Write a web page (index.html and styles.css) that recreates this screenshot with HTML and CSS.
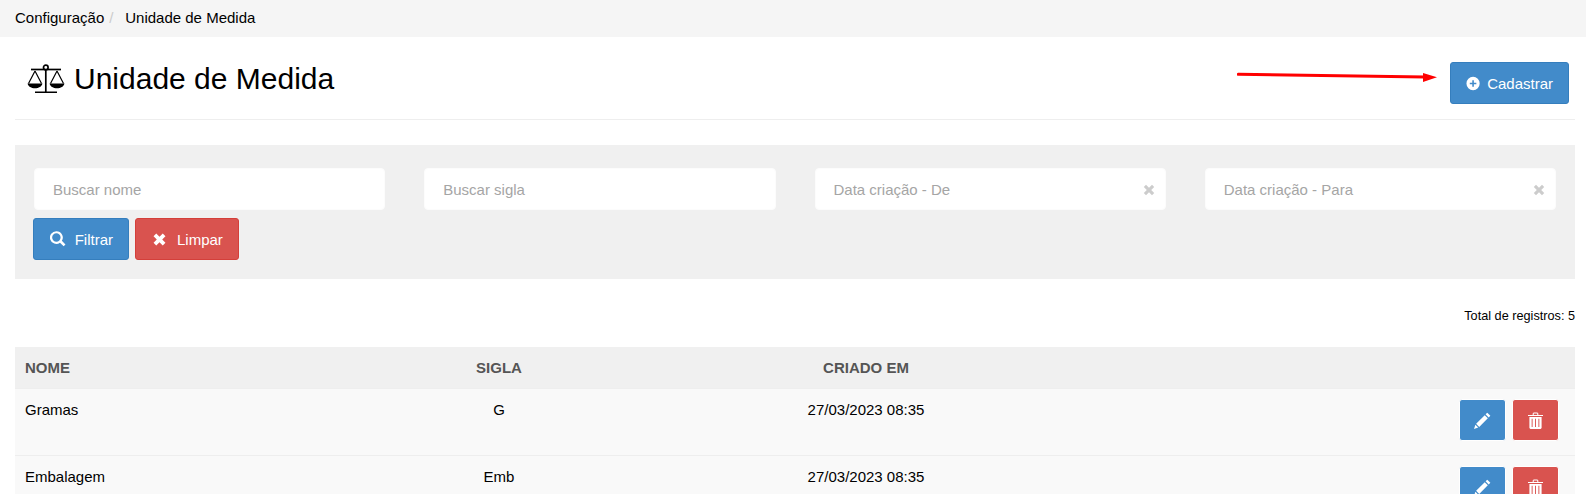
FILE: index.html
```html
<!DOCTYPE html>
<html lang="pt-BR">
<head>
<meta charset="utf-8">
<title>Unidade de Medida</title>
<link rel="stylesheet" href="styles.css">
</head>
<body>
<nav class="breadcrumb"><span>Configuração</span><span class="sep">/</span><span>Unidade de Medida</span></nav>
<main class="content">
  <header class="page-head">
    <h1 class="title">
      <svg class="scale" viewBox="0 0 38 30" aria-hidden="true"><g fill="none" stroke="#000" stroke-width="1.700"><path d="M4 5.500h30"/><path d="M18.800 5v23"/><circle cx="18.800" cy="3.400" r="2.300" fill="#fff"/></g><g fill="none" stroke="#000" stroke-width="1.200"><path d="M8 7 1.500 19.500M8 7l6.500 12.500M30 7l-6.500 12.500M30 7l6.500 12.500"/></g><path d="M.5 19.500h15c-.8 3.200-3.800 4.800-7.500 4.800s-6.700-1.600-7.500-4.800ZM22.500 19.500h15c-.8 3.200-3.800 4.800-7.500 4.800s-6.700-1.600-7.500-4.800Z"/><path d="M8 27.500h22V29H8z"/></svg>
      Unidade de Medida
    </h1>
    <button class="btn btn-blue btn-add"><svg class="ic" viewBox="0 0 16 16"><path fill-rule="evenodd" d="M8 .5a7.500 7.500 0 1 0 0 15 7.500 7.500 0 0 0 0-15ZM7.100 4.300h1.800v2.800h2.800v1.800H8.900v2.800H7.100V8.900H4.300V7.100h2.800Z"/></svg>Cadastrar</button>
    <svg class="arrow" viewBox="0 0 202 12" aria-hidden="true"><path d="M1.300 2.300 188 5" stroke="#f00" stroke-width="3" stroke-linecap="round" fill="none"/><path d="M186 1l14 4.300L186 10Z" fill="#f00"/></svg>
  </header>

  <section class="filters">
    <div class="fields">
      <div class="field">Buscar nome</div>
      <div class="field">Buscar sigla</div>
      <div class="field">Data criação - De<svg class="clear" viewBox="0 0 12 12"><path d="M3 .8 6 3.800 9 .8 11.200 3 8.200 6l3 3L9 11.200l-3-3-3 3L.8 9l3-3-3-3Z"/></svg></div>
      <div class="field">Data criação - Para<svg class="clear" viewBox="0 0 12 12"><path d="M3 .8 6 3.800 9 .8 11.200 3 8.200 6l3 3L9 11.200l-3-3-3 3L.8 9l3-3-3-3Z"/></svg></div>
    </div>
    <div class="actions">
      <button class="btn btn-blue btn-filter"><svg class="ic" viewBox="0 0 16 16"><path fill-rule="evenodd" d="M6.500 0a6.500 6.500 0 1 0 3.700 11.800l3.700 3.700 1.900-1.900-3.700-3.700A6.500 6.500 0 0 0 6.500 0Zm0 2.200a4.300 4.300 0 1 1 0 8.600 4.300 4.300 0 0 1 0-8.600Z"/></svg>Filtrar</button>
      <button class="btn btn-red btn-clear"><svg class="ic" viewBox="0 0 12 12"><path d="M3 .5 6 3.500 9 .5 11.500 3 8.500 6l3 3L9 11.500l-3-3-3 3L.5 9l3-3-3-3Z"/></svg>Limpar</button>
    </div>
  </section>

  <p class="total">Total de registros: 5</p>

  <div class="table">
    <div class="row head">
      <div class="c-name">NOME</div><div class="c-center">SIGLA</div><div class="c-center">CRIADO EM</div><div></div>
    </div>
    <div class="row">
      <div class="c-name">Gramas</div><div class="c-center">G</div><div class="c-center">27/03/2023 08:35</div>
      <div class="c-act">
        <button class="btn-sq btn-blue"><svg class="ic-e" viewBox="0 0 16 16"><path d="M12.500.6 15.400 3.500 13.800 5.100 10.900 2.200ZM10.100 3 13 5.900 4.900 14 2 11.100ZM1.300 12 4 14.700 0 16Z"/></svg></button>
        <button class="btn-sq btn-red"><svg class="ic-t" viewBox="0 0 16 18"><path fill-rule="evenodd" d="M0 3h5V1.500L6 .5h4l1 1V3h5v1.100H0ZM6.100 3h3.800V1.600H6.100ZM1.500 5.200h13V17l-1 1h-11l-1-1ZM3.900 7v9h1V7Zm3.600 0v9h1V7Zm3.600 0v9h1V7Z"/></svg></button>
      </div>
    </div>
    <div class="row">
      <div class="c-name">Embalagem</div><div class="c-center">Emb</div><div class="c-center">27/03/2023 08:35</div>
      <div class="c-act">
        <button class="btn-sq btn-blue"><svg class="ic-e" viewBox="0 0 16 16"><path d="M12.500.6 15.400 3.500 13.800 5.100 10.900 2.200ZM10.100 3 13 5.900 4.900 14 2 11.100ZM1.300 12 4 14.700 0 16Z"/></svg></button>
        <button class="btn-sq btn-red"><svg class="ic-t" viewBox="0 0 16 18"><path fill-rule="evenodd" d="M0 3h5V1.500L6 .5h4l1 1V3h5v1.100H0ZM6.100 3h3.800V1.600H6.100ZM1.500 5.200h13V17l-1 1h-11l-1-1ZM3.900 7v9h1V7Zm3.600 0v9h1V7Zm3.600 0v9h1V7Z"/></svg></button>
      </div>
    </div>
  </div>
</main>
</body>
</html>
```
FILE: styles.css
```css
* { box-sizing: border-box; }
html, body { margin: 0; height: 494px; overflow: hidden; }
body { background: #fff; color: #000; font: 15px/21px "Liberation Sans", Arial, sans-serif; }

.breadcrumb { height: 37px; background: #f5f5f5; padding: 7px 15px; display: flex; }
.sep { color: #ccc; padding-left: 5px; width: 21px; }

.content { padding: 0 11px 0 15px; }

.page-head { position: relative; height: 83px; border-bottom: 1px solid #eee; display: flex; justify-content: space-between; align-items: flex-start; padding-top: 25px; padding-right: 6px; }
.title { margin: 0; display: flex; align-items: center; font-size: 30px; line-height: 33px; font-weight: 400; padding-left: 12px; gap: 9px; height: 33px; }
.scale { width: 38px; height: 30px; }
.arrow { position: absolute; left: 1222px; top: 35px; width: 202px; height: 12px; }

.btn { height: 42px; padding: 0 15px; border-radius: 3px; border: 1px solid; color: #fff; font: inherit; display: inline-flex; align-items: center; }
.btn-blue { background: #428bca; border-color: #357ebd; }
.btn-red { background: #d9534f; border-color: #d43f3a; }
.ic { width: 16px; height: 16px; fill: currentColor; margin-right: 9px; }
.btn-add { padding: 0 15px; width: 119px; }
.btn-add .ic { width: 15px; height: 15px; margin-right: 7px; }

.filters { margin-top: 25px; height: 134px; background: #f0f0f0; padding: 23px 19px 0 19px; }
.fields { display: grid; grid-template-columns: repeat(4, 1fr); column-gap: 39px; }
.field { position: relative; height: 42px; background: #fff; border-radius: 4px; border: 1px solid #fcfcfc; color: #a5a5a5; padding: 10px 18px; }
.clear { position: absolute; right: 10px; top: 15px; width: 12px; height: 12px; fill: #ccc; }
.actions { display: flex; gap: 6px; margin-top: 8px; margin-left: -1px; }
.btn-filter { width: 96px; padding-left: 16px; }
.btn-clear { width: 104px; padding-left: 17px; }
.btn-clear .ic { width: 13px; height: 13px; margin-right: 11px; }

.total { margin: 0; padding-top: 26px; text-align: right; font-size: 12.7px; line-height: 22px; height: 68px; }

.table { width: 100%; }
.row { display: grid; grid-template-columns: 352px 264px 470px 1fr; height: 67px; background: #f9f9f9; border-bottom: 1px solid #eee; padding-top: 10px; }
.row.head { height: 42px; background: #f0f0f0; color: #555; font-weight: 700; padding-top: 10px; }
.c-name { padding-left: 10px; }
.c-center { text-align: center; }
.c-act { display: flex; justify-content: flex-end; gap: 6px; padding-right: 16px; }
.btn-sq { width: 47px; height: 42px; border: 1px solid; border-radius: 3px; color: #fff; display: flex; align-items: center; justify-content: center; padding: 0; }
.btn-sq svg { fill: currentColor; }
.ic-e { width: 17px; height: 17px; }
.ic-t { width: 15px; height: 17px; }
```
